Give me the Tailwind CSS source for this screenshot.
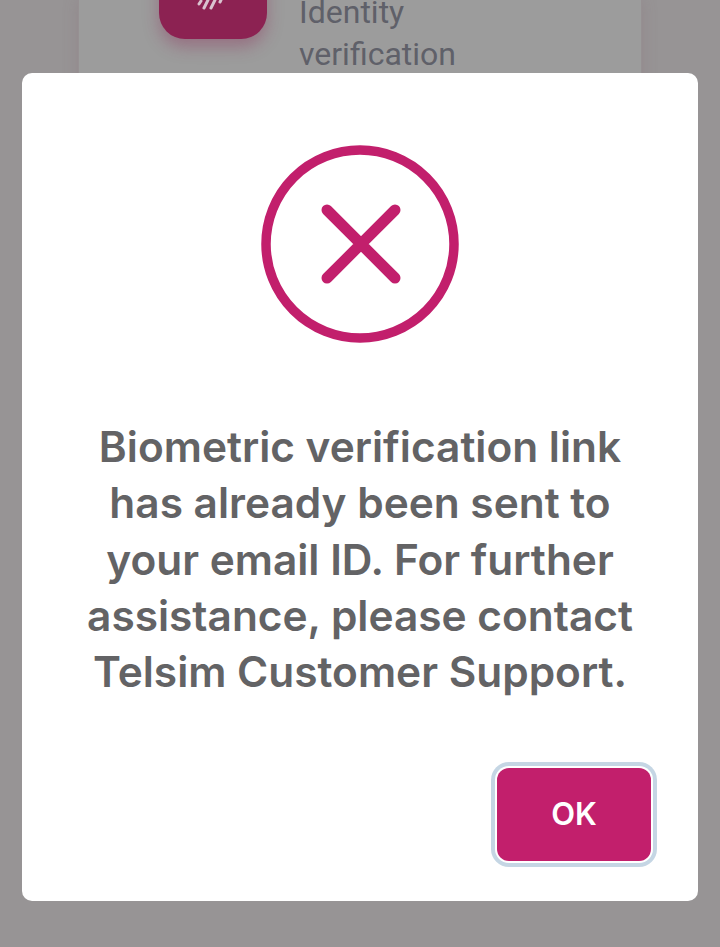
<!DOCTYPE html>
<html lang="en">
<head>
  <meta charset="UTF-8" />
  <meta name="viewport" content="width=device-width, initial-scale=1.0"/>
  <title>Biometric verification</title>
  <script src="https://cdn.jsdelivr.net/npm/@tailwindcss/browser@4"></script>
</head>
<body class="relative h-[947px] w-[720px] overflow-hidden bg-[#979495] font-['Inter',sans-serif]">
  <!-- page behind the dialog -->
  <div class="flex justify-center">
    <div class="flex h-[500px] w-[564px] gap-8 border-x border-[#969092] bg-[#9c9c9c] pl-[80px] shadow-[0_0_14px_rgba(130,100,112,0.25)]">
      <div class="mt-[-40px] flex h-[79px] w-[108px] shrink-0 items-start justify-center rounded-b-[26px] bg-[#8c2252] shadow-[0_8px_16px_rgba(140,34,82,0.35)]">
        <svg class="mt-[40px]" width="44" height="10" viewBox="0 0 44 10" fill="none" stroke="#d9c3cf" stroke-width="3" stroke-linecap="round">
          <path d="M10 1 8 4M17 0 13 8M24 0 20 8M30 0 29 2"/>
        </svg>
      </div>
      <p class="mt-[-9px] w-[170px] font-['Roboto',sans-serif] text-[32px] leading-[42px] text-[#5f6069]">Identity verification</p>
    </div>
  </div>

  <!-- dialog -->
  <div class="absolute inset-0 flex items-start justify-center pt-[73px]">
    <div class="flex h-[828px] w-[676px] flex-col items-center rounded-[10px] bg-white pt-[72px]">
      <svg width="198" height="198" viewBox="0 0 198 198" fill="none" stroke="#c21f6c">
        <circle cx="99" cy="99" r="94" stroke-width="9.5"/>
        <path d="M66 65 134 133M134 65 66 133" stroke-width="11" stroke-linecap="round"/>
      </svg>
      <p class="mt-[76px] w-[570px] text-center text-[42.4px] leading-[56.25px] font-semibold text-[#636365]">Biometric verification link has already been sent to your email ID. For further assistance, please contact Telsim Customer Support.</p>
      <div class="mt-auto flex w-full justify-end pr-[47px] pb-[40px]">
        <button class="flex h-[93px] w-[154px] items-center justify-center rounded-[12px] bg-[#c21f6c] text-[31px] font-semibold text-white shadow-[0_0_0_2px_#ffffff,0_0_0_6px_#c5d6e4]">OK</button>
      </div>
    </div>
  </div>
</body>
</html>
